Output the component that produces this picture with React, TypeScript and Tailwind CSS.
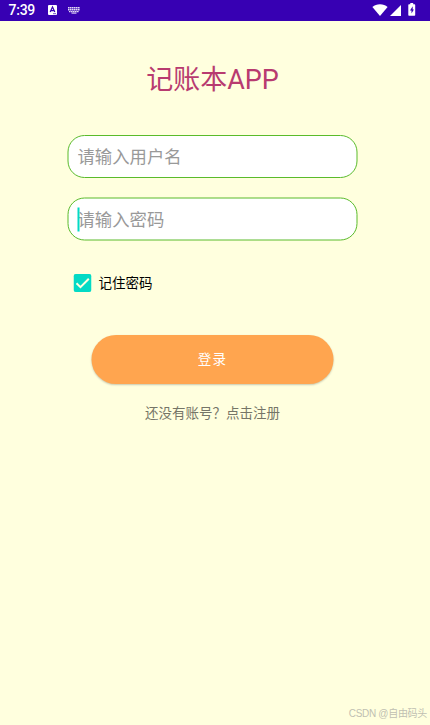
import React from "react";

function StatusBar() {
  return (
    <header className="flex h-[21px] items-center bg-[#3700b3] pl-[8.5px] text-white">
      <span className="w-[39.5px] font-[Roboto,sans-serif] text-[14px] leading-[21px] tracking-[-0.25px] font-medium">7:39</span>
      <svg className="-mt-px h-[10px] w-[9px]" viewBox="0 0 9 10">
        <rect width="9" height="10" rx="1" fill="#fff" />
        <path d="M2.2 7 4.5 2 6.8 7M3 5.7h3" fill="none" stroke="#3700b3" strokeWidth="1.2" />
        <path d="M5 8.7h3" stroke="#3700b3" strokeWidth=".7" />
      </svg>
      <svg className="ml-[11px] -mt-px h-[7px] w-[12px]" viewBox="0 0 12 7">
        <path d="M0 .8h12M0 2.8h12M1 4.6h10" stroke="#e2d9f4" strokeWidth="1.4" strokeDasharray="1.6 .4" />
        <path d="M3.5 6.1h5" stroke="#d4c7ef" strokeWidth="1.2" />
      </svg>
      <svg className="ml-auto -mt-[2px] h-[12px] w-[16px]" viewBox="0 0 16 12">
        <path d="M8 12 .4 3C2.5 1.1 5 .2 8 .2s5.5.9 7.6 2.8z" fill="#fff" />
      </svg>
      <svg className="ml-[2px] -mt-px h-[11px] w-[12px]" viewBox="0 0 12 11">
        <path d="M11 0v11H0z" fill="#fff" />
      </svg>
      <svg className="mr-[14px] ml-[6px] -mt-[2px] h-[13px] w-[8px]" viewBox="0 0 8 13">
        <path d="M2.3 0h2.9v1.2h1.3q.7 0 .7.7v10q0 .8-.7.8H1q-.7 0-.7-.8v-10q0-.7.7-.7h1.3z" fill="#fff" />
        <path d="M4.7 3.3 2 7.4h1.5v3.2l2.4-4.2H4.7z" fill="#3700b3" />
      </svg>
    </header>
  );
}

const field =
  "block h-[43px] w-full rounded-[17px] border border-[#5abb2b] bg-white pl-[9.5px] pr-3 text-[17.35px] text-[#999] placeholder:text-[#999] outline-none";

export default function App() {
  return (
    <div className="relative flex h-[725px] w-[430px] flex-col overflow-hidden bg-[#ffffde] font-[Roboto,'Noto_Sans_CJK_SC',sans-serif]">
      <StatusBar />
      <main className="flex w-[425px] flex-col items-center">
        <h1 className="mt-[39px] h-10 text-[27px] leading-10 text-[#b83b70]">记账本APP</h1>
        <form className="mt-[35px] flex w-[290px] -translate-x-[0.5px] flex-col">
          <input className={field} placeholder="请输入用户名" />
          <div className="relative mt-[19px] translate-y-[0.5px]">
            <input className={field} type="password" placeholder="请输入密码" />
            <span className="absolute top-[9.5px] left-[10px] h-6 w-[2px] bg-[#03dac5]" />
          </div>
          <label className="mt-[33px] ml-[6px] flex h-5 items-center text-[13.5px] leading-5 text-black">
            <svg className="mr-[7.5px] h-[18px] w-[18px]" viewBox="0 0 18 18">
              <rect width="18" height="18" rx="2.2" fill="#03dac5" />
              <path d="m3 9.2 4 4 8.3-8.4" fill="none" stroke="#ffffde" strokeWidth="2" />
            </svg>
            记住密码
          </label>
          <button
            type="button"
            className="mt-[42px] flex h-[49px] w-[242px] items-center justify-center self-center rounded-full bg-[#ffa54f] pl-px text-[13.5px] tracking-[1.2px] text-white shadow-[0_1px_2px_rgba(0,0,0,0.22)]"
          >
            登录
          </button>
        </form>
        <a className="mt-[19px] h-5 text-[13.5px] leading-5 text-[#757567]">还没有账号？点击注册</a>
      </main>
      <footer className="absolute right-[3px] bottom-[3px] font-['Liberation_Sans','Noto_Sans_CJK_SC',sans-serif] text-[10px] leading-4 tracking-[-0.3px] text-[#bfbfb2]">
        CSDN @自由码头
      </footer>
    </div>
  );
}
